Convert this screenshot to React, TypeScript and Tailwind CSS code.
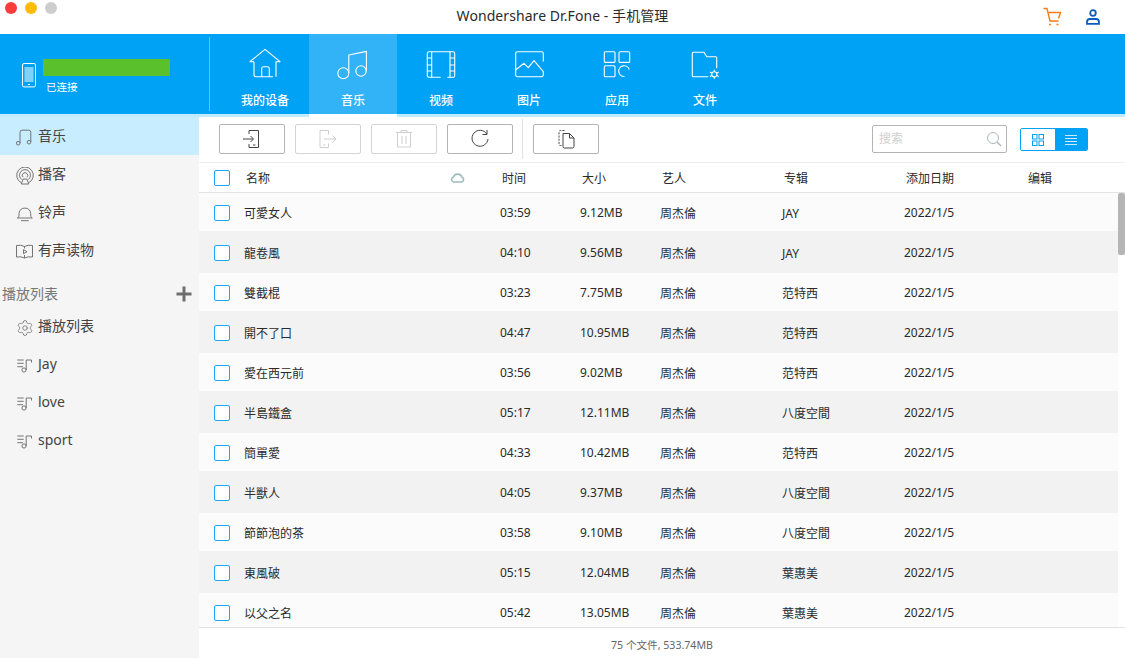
import {Settings} from 'lucide-react';

const songs = [
  ['可愛女人', '03:59', '9.12MB', 'JAY'],
  ['龍卷風', '04:10', '9.56MB', 'JAY'],
  ['雙截棍', '03:23', '7.75MB', '范特西'],
  ['開不了口', '04:47', '10.95MB', '范特西'],
  ['愛在西元前', '03:56', '9.02MB', '范特西'],
  ['半島鐵盒', '05:17', '12.11MB', '八度空間'],
  ['簡單愛', '04:33', '10.42MB', '范特西'],
  ['半獸人', '04:05', '9.37MB', '八度空間'],
  ['節節泡的茶', '03:58', '9.10MB', '八度空間'],
  ['東風破', '05:15', '12.04MB', '葉惠美'],
  ['以父之名', '05:42', '13.05MB', '葉惠美'],
];

const cols = 'grid grid-cols-[16px_270px_80px_80px_122px_122px_122px_1fr] items-center';

function NavIcon({children}: {children: React.ReactNode}) {
  return (
    <svg width="36" height="32" viewBox="0 0 36 32" fill="none" stroke="white" strokeWidth="1.1" strokeLinejoin="round">
      {children}
    </svg>
  );
}

const navItems: {label: string; active?: boolean; icon: React.ReactNode}[] = [
  {
    label: '我的设备',
    icon: (
      <>
        <path d="M7 13.7H3L18 1.3L33 13.7H29V28.7" />
        <path d="M7 13.7V26.7a2 2 0 0 0 2 2H26" />
        <path d="M14.7 28.7V20.7a2 2 0 0 1 2-2H20.3a2 2 0 0 1 2 2V28.7" />
      </>
    ),
  },
  {
    label: '音乐',
    active: true,
    icon: (
      <>
        <circle cx="8.3" cy="25.3" r="5.5" />
        <circle cx="26" cy="23" r="5.2" />
        <path d="M13.8 25V7L31.4 3.4V23" />
      </>
    ),
  },
  {
    label: '视频',
    icon: (
      <>
        <path d="M17.7 29.3H6a1.7 1.7 0 0 1-1.7-1.7V5.4A1.7 1.7 0 0 1 6 3.7H30a1.7 1.7 0 0 1 1.7 1.7V27.6a1.7 1.7 0 0 1-1.7 1.7H24.3" />
        <path d="M8.7 3.7V29.3M27 3.7V29.3M4.3 10H8.7M4.3 17H8.7M4.3 23H8.7M27 10H31.7M27 17H31.7M27 23H31.7" />
      </>
    ),
  },
  {
    label: '图片',
    icon: (
      <>
        <path d="M32.3 13.5V5.4a1.7 1.7 0 0 0-1.7-1.7H6.4a1.7 1.7 0 0 0-1.7 1.7V27a1.7 1.7 0 0 0 1.7 1.7H30.6a1.7 1.7 0 0 0 1.7-1.7V23.7L23 12.7L17.3 19.7L13 15.3L4.7 22" />
      </>
    ),
  },
  {
    label: '应用',
    icon: (
      <>
        <rect x="5.3" y="3.7" width="10.7" height="10.7" rx="1" />
        <rect x="20" y="3.7" width="10.7" height="10.7" rx="1" />
        <rect x="5.3" y="17.7" width="10.7" height="11" rx="1" />
        <path d="M30.3 21.5A5.4 5.4 0 1 0 25.5 28.5" />
      </>
    ),
  },
  {
    label: '文件',
    icon: (
      <>
        <path d="M29.7 20.3V9.7a1 1 0 0 0-1-1H19.7L17 4.3H6.3a1 1 0 0 0-1 1V27.7a1 1 0 0 0 1 1H21.3" />
        <circle cx="27.3" cy="26.3" r="2.6" />
        <path d="M27.3 21.8V23.7M27.3 28.9V30.8M22.9 24L25 25.2M29.6 27.4L31.7 28.6M22.9 28.6L25 27.4M29.6 25.2L31.7 24" />
      </>
    ),
  },
];

function SideIcon({children}: {children: React.ReactNode}) {
  return (
    <svg width="18" height="18" viewBox="0 0 18 18" fill="none" stroke="#666" strokeWidth="0.9" className="mt-[4px] shrink-0">
      {children}
    </svg>
  );
}

function PlaylistIcon() {
  return (
    <SideIcon>
      <path d="M1.3 3H7.7M1.3 6.3H7.7M1.3 9.7H7" />
      <path d="M10.2 13V3H15.5V5.5" />
      <circle cx="8" cy="13" r="2.1" />
    </SideIcon>
  );
}

const sideItems: {label: string; active?: boolean; icon: React.ReactNode}[] = [
  {
    label: '音乐',
    active: true,
    icon: (
      <SideIcon>
        <path d="M4 14V3.2Q4 1.2 6 1.2H12.8Q14.8 1.2 14.8 3.2V13" />
        <circle cx="2.2" cy="14.2" r="1.8" />
        <circle cx="13" cy="13.2" r="1.8" />
      </SideIcon>
    ),
  },
  {
    label: '播客',
    icon: (
      <SideIcon>
        <path d="M5.4 15.8A8.3 8.3 0 1 1 12.6 15.8" />
        <path d="M5.8 12.6A5.5 5.5 0 1 1 12.2 12.6" />
        <path d="M7 10.2A2.7 2.7 0 1 1 11 10.2" />
        <path d="M7.2 12H10.8L12.8 17H5.2Z" />
      </SideIcon>
    ),
  },
  {
    label: '铃声',
    icon: (
      <SideIcon>
        <path d="M3 11.5V8.5A5.9 6.2 0 0 1 14.7 8.5V11.5L16.3 13H1.3Z" />
        <path d="M5 15.7H12.7" />
      </SideIcon>
    ),
  },
  {
    label: '有声读物',
    icon: (
      <SideIcon>
        <path d="M8.5 3.5Q5 1.5 0.5 2.5V14Q5 13.2 8.5 15Q12 13.2 16.5 14V2.5Q12 1.5 8.5 3.5Z" />
        <path d="M8.5 3.5V5.5M8.5 12V15" />
        <path d="M7.5 6.7L11 8.7L7.5 10.7Z" />
      </SideIcon>
    ),
  },
];

const playlists = [
  {label: '播放列表', icon: <Settings className="mt-[4px] h-[18px] w-[18px] shrink-0 text-[#666]" strokeWidth={1} />},
  {label: 'Jay', icon: <PlaylistIcon />},
  {label: 'love', icon: <PlaylistIcon />},
  {label: 'sport', icon: <PlaylistIcon />},
];

function ToolButton({disabled, children}: {disabled?: boolean; children: React.ReactNode}) {
  return (
    <button
      type="button"
      className={`flex h-[30px] w-[66px] items-center justify-center rounded-[2px] border bg-white ${
        disabled ? 'border-[#d4d4d4]' : 'border-[#b4b4b4]'
      }`}
    >
      <svg width="24" height="24" viewBox="0 0 24 24" fill="none" stroke={disabled ? '#cfcfcf' : '#444'} strokeWidth="1">
        {children}
      </svg>
    </button>
  );
}

function Checkbox() {
  return <div className="h-4 w-4 rounded-[2px] border border-[#1ba7f6] bg-white" />;
}

export default function App() {
  return (
    <div className="flex h-[658px] w-[1125px] flex-col overflow-hidden bg-white font-['Noto_Sans','Noto_Sans_CJK_SC',sans-serif] text-[12px] text-[#2a2a2a]">
      {/* title bar */}
      <div className="relative flex h-[34px] shrink-0 items-center justify-center">
        <div className="absolute left-[5px] top-[2px] flex gap-2">
          <span className="h-3 w-3 rounded-full bg-[#fc3d3b]" />
          <span className="h-3 w-3 rounded-full bg-[#fdbb0b]" />
          <span className="h-3 w-3 rounded-full bg-[#cdcdcd]" />
        </div>
        <span className="-mt-[3px] text-[14px] tracking-[0.07px] text-[#2b2b2b]">Wondershare Dr.Fone - 手机管理</span>
        <div className="absolute right-[24px] top-[7px] flex items-center gap-[23px]">
          <svg width="20" height="20" viewBox="0 0 20 20" fill="none" stroke="#ff7a0f" strokeWidth="1.4">
            <path d="M1.5 1.5H5L8 14H16.5" />
            <path d="M6.5 5.5H18.5L16.5 11.5" />
            <path d="M7 17.5H9M14.5 17.5H16.5" />
          </svg>
          <svg width="16" height="18" viewBox="0 0 16 18" fill="none" stroke="#0a5dbd" strokeWidth="1.8">
            <circle cx="8" cy="5" r="2.8" />
            <path d="M2 15.8V14Q2 11 5 11H11Q14 11 14 14V15.8Z" />
          </svg>
        </div>
      </div>

      {/* blue nav bar */}
      <div className="flex h-20 shrink-0 bg-[#00a2f5] text-white">
        <div className="flex w-[209px] items-start pl-[22px] pt-[25px]">
          <svg width="14" height="25" viewBox="0 0 14 25" fill="none" className="mt-[4px] shrink-0">
            <rect x="0.5" y="0.5" width="13" height="23.4" rx="1.5" stroke="white" />
            <rect x="2.5" y="4" width="9" height="15" fill="#80d1fb" />
            <path d="M6 21.5H8" stroke="white" />
          </svg>
          <div className="ml-[7px]">
            <div className="h-[17px] w-[127px] bg-[#5ac02c]" />
            <div className="ml-[3px] mt-[2px] text-[10.5px] leading-[18px]">已连接</div>
          </div>
        </div>
        <div className="my-[3px] mr-[11px] w-px bg-[#5cc6fa]" />
        {navItems.map((item) => (
          <div
            key={item.label}
            className={`flex w-[88px] flex-col items-center pt-[14px] ${item.active ? 'bg-[#33b3f7]' : ''}`}
          >
            <NavIcon>{item.icon}</NavIcon>
            <div className="mt-[12px] text-[12px] font-medium leading-[18px]">{item.label}</div>
          </div>
        ))}
      </div>

      {/* strip under the nav */}
      <div className="flex h-[3px] shrink-0">
        <div className="w-[309px] bg-[#c0eafd]" />
        <div className="w-[88px] bg-white" />
        <div className="flex-1 bg-[#c0eafd]" />
      </div>

      <div className="flex min-h-0 flex-1">
        {/* sidebar */}
        <div className="w-[199px] shrink-0 bg-[#f5f5f5] text-[14px] text-[#444]">
          {sideItems.map((item) => (
            <div
              key={item.label}
              className={`flex h-[38px] items-center gap-[4px] pl-[16px] ${item.active ? 'bg-[#c8edff]' : ''}`}
            >
              {item.icon}
              <span className="pb-[2px]">{item.label}</span>
            </div>
          ))}
          <div className="mt-[12px] flex h-[26px] items-center justify-between pl-[2px] pr-[7px] text-[#777]">
            <span className="pb-[2px]">播放列表</span>
            <svg width="16" height="16" viewBox="0 0 16 16" fill="#6e6e6e">
              <rect x="0.5" y="6.5" width="15" height="3" />
              <rect x="6.5" y="0.5" width="3" height="15" />
            </svg>
          </div>
          {playlists.map((item) => (
            <div key={item.label} className="flex h-[38px] items-center gap-[4px] pl-[16px]">
              {item.icon}
              <span className="pb-[2px]">{item.label}</span>
            </div>
          ))}
        </div>

        {/* main content */}
        <div className="flex min-w-0 flex-1 flex-col">
          {/* toolbar */}
          <div className="flex h-[46px] shrink-0 items-center border-b border-[#f0f0f0] pb-[1px] pl-[20px] pr-[37px]">
            <div className="flex gap-[10px]">
              <ToolButton>
                <path d="M9 7V3.5H18.5V20.5H9V17" />
                <path d="M3 12H13M10.5 9L13.5 12L10.5 15M13 18H15.5" />
              </ToolButton>
              <ToolButton disabled>
                <path d="M12.5 7.5V3.5H4V20.5H12.5V16.5" />
                <path d="M8 12H19.5M16.5 8.5L20 12L16.5 15.5M7 18H9.5" />
              </ToolButton>
              <ToolButton disabled>
                <path d="M4 5.5H20M9 5.5V3.5H15V5.5M5.5 5.5V20H18.5V5.5M10 9V17M14 9V17" />
              </ToolButton>
              <ToolButton>
                <path d="M18.8 7A8 8 0 1 0 20 12" />
                <path d="M19 3V7.5H14.5" />
              </ToolButton>
            </div>
            <div className="ml-[9px] mr-[10px] h-10 w-px bg-[#e2e2e2]" />
            <ToolButton>
              <path d="M7.5 18.5H6.5Q5 18.5 5 17V5Q5 3.5 6.5 3.5H10.5" strokeDasharray="2 1.2" />
              <path d="M9 6.5H15.5L20 11V19.5Q20 21 18.5 21H10.5Q9 21 9 19.5ZM15.5 6.5V11H20" />
            </ToolButton>
            <div className="ml-auto flex h-7 w-[135px] items-center justify-between rounded-[2px] border border-[#b4b4b4] pl-[6px] pr-[4px] text-[#cfcfcf]">
              <span>搜索</span>
              <svg width="16" height="16" viewBox="0 0 16 16" fill="none" stroke="#a9b9bd" strokeWidth="1">
                <circle cx="7" cy="7" r="5.5" />
                <path d="M11 11L15 15" strokeWidth="1.5" />
              </svg>
            </div>
            <div className="ml-[13px] mt-[1px] flex h-[23px] w-[68px] overflow-hidden rounded-[2px] border border-[#00a2f5]">
              <div className="flex w-[34px] items-center justify-center bg-white">
                <svg width="12" height="12" viewBox="0 0 12 12" fill="none" stroke="#00a2f5">
                  <rect x="0.5" y="0.5" width="4.5" height="4.5" />
                  <rect x="7" y="0.5" width="4.5" height="4.5" />
                  <rect x="0.5" y="7" width="4.5" height="4.5" />
                  <rect x="7" y="7" width="4.5" height="4.5" />
                </svg>
              </div>
              <div className="flex flex-1 items-center justify-center bg-[#00a2f5]">
                <svg width="12" height="10" viewBox="0 0 12 10" fill="none" stroke="white" strokeWidth="0.8">
                  <path d="M0 0.5H12M0 3.5H12M0 6.5H12M0 9.5H12" />
                </svg>
              </div>
            </div>
          </div>

          {/* table header */}
          <div className={`${cols} h-[30px] shrink-0 border-b border-[#e4e4e4] pl-[15px]`}>
            <Checkbox />
            <div className="flex items-center justify-between pl-4 pr-[35px]">
              <span className="pt-[2px]">名称</span>
              <svg width="15" height="10" viewBox="0 0 15 10" fill="none" stroke="#9fbcbc" strokeWidth="1.6">
                <path d="M3.5 9H11.5A2.5 2.5 0 0 0 12 4.2A4.5 4.5 0 0 0 3.6 3.8A2.7 2.7 0 0 0 3.5 9Z" />
              </svg>
            </div>
            <span className="pl-[2px] pt-[2px]">时间</span>
            <span className="pl-[2px] pt-[2px]">大小</span>
            <span className="pl-[2px] pt-[2px]">艺人</span>
            <span className="pl-[2px] pt-[2px]">专辑</span>
            <span className="pl-[2px] pt-[2px]">添加日期</span>
            <span className="pl-[2px] pt-[2px]">编辑</span>
          </div>

          {/* table rows: odd rows are 38px, even rows 42px */}
          <div className="flex min-h-0 flex-1">
            <div className="min-w-0 flex-1 overflow-hidden">
              {songs.map((song, i) => (
                <div
                  key={song[0]}
                  className={`${cols} pl-[15px] pt-[2px] ${i % 2 === 0 ? 'h-[38px] bg-[#fbfbfb]' : 'h-[42px] bg-[#f2f2f2]'}`}
                >
                  <Checkbox />
                  <span className="pl-[14px] pt-[1px]">{song[0]}</span>
                  <span>{song[1]}</span>
                  <span>{song[2]}</span>
                  <span className="pt-[1px]">周杰倫</span>
                  <span className="pt-[1px]">{song[3]}</span>
                  <span>2022/1/5</span>
                  <span />
                </div>
              ))}
            </div>
            <div className="w-[7px] shrink-0">
              <div className="h-[62px] rounded-[2px] bg-[#b5b5b5]" />
            </div>
          </div>

          {/* footer */}
          <div className="flex h-[31px] shrink-0 items-end justify-center border-t border-[#e4e4e4] pb-[5px] text-[10.6px] leading-[16px] text-[#666]">
            75 个文件, 533.74MB
          </div>
        </div>
      </div>
    </div>
  );
}
